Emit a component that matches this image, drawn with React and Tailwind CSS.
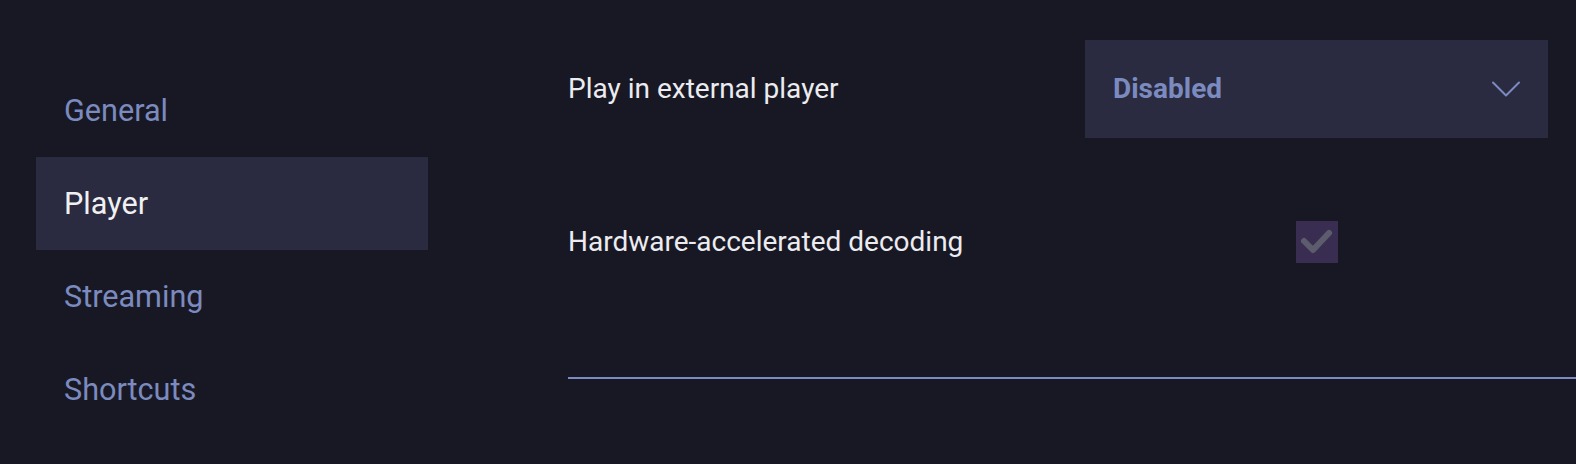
// Settings — Player section
const sections = ["General", "Player", "Streaming", "Shortcuts"];

const ChevronDown = () => (
  <svg width="28" height="16" viewBox="0 0 28 16" fill="none" stroke="currentColor" strokeWidth="2" strokeLinecap="round" strokeLinejoin="round">
    <polyline points="1,1.5 14,14.5 27,1.5" />
  </svg>
);

const CheckBox = () => (
  <div className="w-[42px] h-[42px] bg-[#3a2d52] flex items-center justify-center">
    <svg width="42" height="42" viewBox="0 0 42 42" fill="none" stroke="#5d5c6d" strokeWidth="6" strokeLinecap="round" strokeLinejoin="round">
      <polyline points="8,20 17,29 33,12" />
    </svg>
  </div>
);

export default function App() {
  const active = "Player";

  return (
    <div className="min-h-screen h-[464px] w-full bg-[#181824] flex font-['Roboto',sans-serif] overflow-hidden">
      {/* Sidebar */}
      <nav className="pl-[36px] pt-[64px] w-[428px] shrink-0">
        {sections.map((s) => (
          <div
            key={s}
            className={`h-[93px] flex items-center pl-[28px] text-[30.6px] ${
              s === active ? "bg-[#2a2a40] text-[#f0f0f2]" : "text-[#7b8bbf]"
            }`}
          >
            {s}
          </div>
        ))}
      </nav>

      {/* Content */}
      <div className="flex-1 pl-[140px] pt-[40px] flex flex-col">
        <div className="pr-[28px]">
          <div className="grid grid-cols-[517px_1fr] h-[98px] items-center">
            <span className="text-[28px] text-[#ececf0]">Play in external player</span>
            <button className="h-[98px] bg-[#2a2a40] flex items-center justify-between pl-[28px] pr-[28px] text-[#7b8bbf]">
              <span className="text-[28px] font-bold">Disabled</span>
              <ChevronDown />
            </button>
          </div>

          <div className="grid grid-cols-[517px_1fr] h-[98px] items-center mt-[55px]">
            <span className="text-[28px] text-[#ececf0]">Hardware-accelerated decoding</span>
            <div className="flex justify-center">
              <CheckBox />
            </div>
          </div>
        </div>

        <div className="mt-[86px] h-[2px] bg-[#7b8bbf]"></div>
      </div>
    </div>
  );
}
